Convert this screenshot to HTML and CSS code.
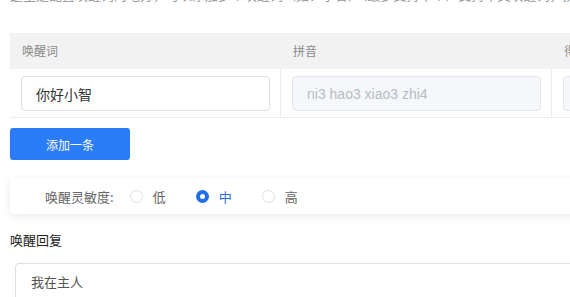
FILE: index.html
```html
<!DOCTYPE html>
<html lang="zh-CN">
<head>
  <meta charset="UTF-8" />
  <title>唤醒词设置</title>
  <link rel="stylesheet" href="styles.css">
</head>
<body>
  <div class="page">
    <p class="intro">这里是配置唤醒词的地方，可以添加多个唤醒词（如：小智）（最多支持十个）支持中文唤醒词，拼音自动生成，得分阈值可调</p>

    <div class="table">
      <div class="row head">
        <div class="cell">唤醒词</div>
        <div class="cell">拼音</div>
        <div class="cell">得分阈值</div>
      </div>
      <div class="row">
        <div class="cell"><input class="input" type="text" value="你好小智"></div>
        <div class="cell"><input class="input disabled" type="text" placeholder="ni3 hao3 xiao3 zhi4" disabled></div>
        <div class="cell"><input class="input disabled" type="text" disabled></div>
      </div>
    </div>

    <button class="btn-add">添加一条</button>

    <div class="sense-card">
      <span class="sense-label">唤醒灵敏度:</span>
      <label class="radio"><span class="dot"></span>低</label>
      <label class="radio checked"><span class="dot"></span>中</label>
      <label class="radio"><span class="dot"></span>高</label>
    </div>

    <div class="section-title">唤醒回复</div>
    <div class="reply-box">我在主人</div>
  </div>
</body>
</html>
```

FILE: styles.css
```css
* {
  margin: 0;
  padding: 0;
  box-sizing: border-box;
  font-family: "Noto Sans CJK SC", "Liberation Sans", sans-serif;
}

body {
  background: #fff;
  overflow: hidden;
  width: 570px;
  height: 297px;
}

.page {
  padding-left: 10px;
  width: 900px;
}

.intro {
  font-size: 13px;
  line-height: 20px;
  color: #999;
  margin-top: -15px;
  white-space: nowrap;
}

/* table */
.table {
  margin-top: 28px;
  width: 860px;
}

.row {
  display: grid;
  grid-template-columns: 271px 271px 318px;
  border-bottom: 1px solid #ececec;
}

.row.head {
  background: #f2f2f2;
  height: 36px;
  border-bottom: none;
}

.row.head .cell {
  font-size: 12px;
  color: #8a8a8a;
  line-height: 36px;
  padding-left: 12px;
}

.row .cell {
  padding: 7px 10px 6px 11px;
  border-right: 1px solid #ececec;
}

.row.head .cell {
  padding-top: 0;
  padding-bottom: 0;
  border-right: none;
}

.input {
  width: 100%;
  height: 35px;
  border: 1px solid #dcdfe6;
  border-radius: 4px;
  padding: 0 14px;
  font-size: 14px;
  font-family: "Liberation Sans", "Noto Sans CJK SC", sans-serif;
  color: #333;
  outline: none;
  background: #fff;
}

.input.disabled {
  background: #f5f7fa;
  border-color: #e4e7ed;
}

.input::placeholder {
  color: #b8bcc4;
}

/* add button */
.btn-add {
  margin-top: 10px;
  width: 120px;
  height: 32px;
  border: none;
  border-radius: 3px;
  background: #2b7cf8;
  color: #fff;
  font-size: 12px;
}

/* sensitivity */
.sense-card {
  margin-top: 18px;
  height: 36px;
  width: 600px;
  display: flex;
  align-items: center;
  padding-left: 35px;
  background: #fff;
  box-shadow: 0 2px 10px rgba(0, 0, 0, 0.09);
  border-radius: 4px;
}

.sense-label {
  font-size: 13px;
  color: #666;
  margin-right: 16px;
}

.radio {
  display: flex;
  align-items: center;
  font-size: 13px;
  color: #666;
  margin-right: 30px;
}

.dot {
  width: 13px;
  height: 13px;
  border: 1px solid #dcdfe6;
  border-radius: 50%;
  margin-right: 10px;
  background: #fff;
}

.radio.checked {
  color: #1f6fe8;
}

.radio.checked .dot {
  border: 4px solid #1f6fe8;
}

.section-title {
  margin-top: 16px;
  font-size: 13px;
  color: #222;
}

.reply-box {
  margin-top: 14px;
  margin-left: 5px;
  width: 700px;
  height: 50px;
  border: 1px solid #dcdfe6;
  border-radius: 4px;
  padding: 8px 15px;
  font-size: 13px;
  color: #555;
}
```
